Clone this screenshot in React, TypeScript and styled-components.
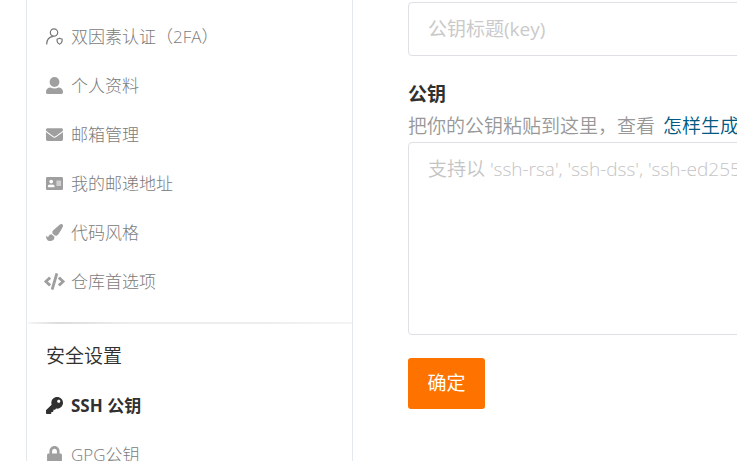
import React from 'react';
import styled, { createGlobalStyle } from 'styled-components';
import { FaAddressCard, FaCode, FaEnvelope, FaKey, FaLock, FaPaintBrush } from 'react-icons/fa';

const GlobalStyle = createGlobalStyle`
  *, *::before, *::after { box-sizing: border-box; }
  body {
    margin: 0;
    background: #fff;
    color: #303030;
    font-family: "Open Sans", "Noto Sans CJK SC", sans-serif;
    font-size: 19px;
    font-weight: 350;
    overflow-x: hidden;
  }
`;

const Page = styled.div`
  display: flex;
  min-height: 100vh;
  padding-left: 26px;
  overflow: hidden;
`;

const Sidebar = styled.nav`
  flex: 0 0 327px;
  padding-top: 12px;
  border: solid #e3e9ed;
  border-width: 0 1px;
`;

const Menu = styled.ul`
  list-style: none;
  margin: 0;
  padding: 0;
`;

const MenuLink = styled.a<{ $active?: boolean }>`
  display: flex;
  align-items: center;
  gap: 6px;
  height: 49px;
  padding-left: 17px;
  color: ${(p) => (p.$active ? '#303030' : '#7b7b7b')};
  font-size: 17px;
  font-weight: ${(p) => (p.$active ? 700 : 300)};
  text-decoration: none;
  white-space: nowrap;
`;

const IconBox = styled.span<{ $active?: boolean }>`
  display: flex;
  justify-content: center;
  width: 21px;
  font-size: 17px;
  color: ${(p) => (p.$active ? '#303030' : '#9f9f9f')};

  svg { flex: none; }
`;

const Label = styled.span`
  padding-bottom: 2px;
`;

const Divider = styled.hr`
  height: 2px;
  margin: 16px 0 8px 1px;
  border: 0;
  background: linear-gradient(to right, #f6f6f6, #dcdcdc 30px, #ededed 100px, #ededed 70%, #f4f4f4);
`;

const GroupTitle = styled.h2`
  margin: 0;
  padding-left: 19px;
  font-size: 19px;
  font-weight: 350;
  line-height: 49px;
`;

const KeyForm = styled.form`
  flex: 1 0 560px;
  padding: 2px 24px 24px 55px;
`;

const TitleInput = styled.input`
  display: block;
  width: 100%;
  height: 54px;
  padding: 0 19px;
  border: 1px solid #dfdfe6;
  border-radius: 4px;
  font: inherit;
  font-weight: 400;

  &::placeholder { color: #cacaca; opacity: 1; }
`;

const FieldLabel = styled.label`
  display: block;
  margin-top: 22px;
  font-weight: 700;
  line-height: 32px;
`;

const Hint = styled.p`
  display: flex;
  gap: 8px;
  margin: 0;
  color: #989898;
  line-height: 32px;
  white-space: nowrap;
`;

const HintLink = styled.a`
  color: #005980;
  text-decoration: none;
`;

const KeyInput = styled.textarea`
  display: block;
  width: 100%;
  height: 193px;
  padding: 12px 19px;
  border: 1px solid #dfdfe6;
  border-radius: 4px;
  font: inherit;
  line-height: 28px;
  resize: none;

  &::placeholder { color: #c4c4c4; opacity: 1; }
`;

const SubmitButton = styled.button`
  min-width: 77px;
  margin-top: 23px;
  padding: 0 19px;
  border: 0;
  border-radius: 3px;
  background: #fe7300;
  color: #fff;
  font: inherit;
  font-weight: 400;
  line-height: 51px;
`;

const UserShieldIcon = () => (
  <svg width="17" height="17" viewBox="0 0 17 17" fill="none" stroke="#777" strokeWidth="1.2" strokeLinecap="round">
    <circle cx="8" cy="4.5" r="3.7" />
    <path d="M.7 16C.8 11.9 3.4 8.9 7.2 8.4" />
    <path d="M13.6 10.2c.8.5 1.5.7 2.500.8v2.100c0 1.500-.9 2.500-2.500 3.100-1.600-.6-2.500-1.600-2.500-3.100V11c1-.1 1.700-.3 2.500-.8z" strokeLinejoin="round" />
  </svg>
);

const PersonIcon = () => (
  <svg width="17" height="17" viewBox="0 0 17 17" fill="currentColor">
    <circle cx="8.5" cy="5" r="4.9" />
    <path d="M4.6 10.5c1.2.6 2.5.9 3.9.9s2.7-.3 3.9-.9c2.7 0 4.6 1.6 4.6 4.3v.5c0 1-.6 1.7-1.6 1.7H1.6C.6 17 0 16.3 0 15.3v-.5c0-2.7 1.9-4.3 4.6-4.3z" />
  </svg>
);

const profileItems = [
  { label: '双因素认证（2FA）', icon: <UserShieldIcon /> },
  { label: '个人资料', icon: <PersonIcon /> },
  { label: '邮箱管理', icon: <FaEnvelope /> },
  { label: '我的邮递地址', icon: <FaAddressCard /> },
  { label: '代码风格', icon: <FaPaintBrush /> },
  { label: '仓库首选项', icon: <FaCode size={21} /> },
];

const securityItems = [
  { label: 'SSH 公钥', icon: <FaKey />, active: true },
  { label: 'GPG公钥', icon: <FaLock /> },
];

type Item = { label: string; icon: React.ReactNode; active?: boolean };

const MenuList = ({ items }: { items: Item[] }) => (
  <Menu>
    {items.map((item) => (
      <li key={item.label}>
        <MenuLink href="#" $active={item.active} aria-current={item.active ? 'page' : undefined}>
          <IconBox $active={item.active} aria-hidden="true">{item.icon}</IconBox>
          <Label>{item.label}</Label>
        </MenuLink>
      </li>
    ))}
  </Menu>
);

export default function App() {
  return (
    <>
      <GlobalStyle />
      <Page>
        <Sidebar>
          <MenuList items={profileItems} />
          <Divider />
          <GroupTitle>安全设置</GroupTitle>
          <MenuList items={securityItems} />
        </Sidebar>
        <KeyForm onSubmit={(e) => e.preventDefault()}>
          <TitleInput type="text" aria-label="标题" placeholder="公钥标题(key)" />
          <FieldLabel htmlFor="public-key">公钥</FieldLabel>
          <Hint>
            <span>把你的公钥粘贴到这里，查看</span>
            <HintLink href="#">怎样生成公钥</HintLink>
          </Hint>
          <KeyInput id="public-key" placeholder="支持以 'ssh-rsa', 'ssh-dss', 'ssh-ed25519' 开头" />
          <SubmitButton type="submit">确定</SubmitButton>
        </KeyForm>
      </Page>
    </>
  );
}
